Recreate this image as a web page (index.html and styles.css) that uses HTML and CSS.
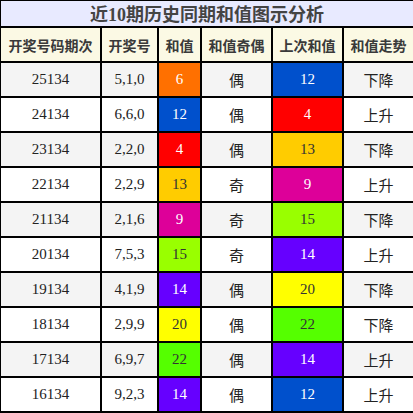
FILE: index.html
```html
<!DOCTYPE html>
<html lang="zh">
<head>
<meta charset="utf-8">
<link rel="stylesheet" href="styles.css">
</head>
<body>
<table class="tbl">
<colgroup>
<col class="c1"><col class="c2"><col class="c3"><col class="c4"><col class="c5"><col class="c6">
</colgroup>
<tr class="title"><th colspan="6">近10期历史同期和值图示分析</th></tr>
<tr class="head"><th>开奖号码期次</th><th>开奖号</th><th>和值</th><th>和值奇偶</th><th>上次和值</th><th>和值走势</th></tr>
<tr class="odd"><td>25134</td><td>5,1,0</td><td class="v orange">6</td><td class="cj">偶</td><td class="v blue">12</td><td class="cj">下降</td></tr>
<tr><td>24134</td><td>6,6,0</td><td class="v blue">12</td><td class="cj">偶</td><td class="v red">4</td><td class="cj">上升</td></tr>
<tr class="odd"><td>23134</td><td>2,2,0</td><td class="v red">4</td><td class="cj">偶</td><td class="v gold dark">13</td><td class="cj">下降</td></tr>
<tr><td>22134</td><td>2,2,9</td><td class="v gold dark">13</td><td class="cj">奇</td><td class="v magenta">9</td><td class="cj">上升</td></tr>
<tr class="odd"><td>21134</td><td>2,1,6</td><td class="v magenta">9</td><td class="cj">奇</td><td class="v lime dark">15</td><td class="cj">下降</td></tr>
<tr><td>20134</td><td>7,5,3</td><td class="v lime dark">15</td><td class="cj">奇</td><td class="v purple">14</td><td class="cj">上升</td></tr>
<tr class="odd"><td>19134</td><td>4,1,9</td><td class="v purple">14</td><td class="cj">偶</td><td class="v yellow dark">20</td><td class="cj">下降</td></tr>
<tr><td>18134</td><td>2,9,9</td><td class="v yellow dark">20</td><td class="cj">偶</td><td class="v green dark">22</td><td class="cj">下降</td></tr>
<tr class="odd"><td>17134</td><td>6,9,7</td><td class="v green dark">22</td><td class="cj">偶</td><td class="v purple">14</td><td class="cj">上升</td></tr>
<tr><td>16134</td><td>9,2,3</td><td class="v purple">14</td><td class="cj">偶</td><td class="v blue">12</td><td class="cj">上升</td></tr>
</table>
</body>
</html>
```
FILE: styles.css
```css
html, body {
  margin: 0;
  padding: 0;
  background: #ffffff;
}
.tbl {
  border-collapse: collapse;
  table-layout: fixed;
  width: 414px;
  margin: -1px 0 0 -1px;
  font-family: "Liberation Serif", "Noto Sans CJK SC", serif;
  color: #222;
}
.c1 { width: 101px; }
.c2 { width: 57px; }
.c3 { width: 43px; }
.c4 { width: 71px; }
.c5 { width: 71px; }
.c6 { width: 71px; }
.tbl th, .tbl td {
  border: 2px solid #000;
  padding: 0;
  text-align: center;
  vertical-align: middle;
}
.title th {
  height: 23px;
  padding-top: 2px;
  background: #e8eaff;
  font-size: 18px;
  font-weight: bold;
  color: #444;
  line-height: 22px;
}
.head th {
  height: 33px;
  background: #fbf9e4;
  font-size: 14px;
  font-weight: bold;
  color: #3a3a3a;
  font-family: "Noto Sans CJK SC", sans-serif;
}
.tbl td {
  height: 33px;
  font-size: 15px;
}
.odd td { background: #f4f4f4; }
.cj {
  font-family: "Noto Sans CJK SC", sans-serif;
  font-size: 15px;
  color: #222;
}
.tbl td.v { color: #fff; }
.tbl td.v.dark { color: #333; }
.tbl td.orange { background: #ff7000; }
.tbl td.blue { background: #0050cc; }
.tbl td.red { background: #ff0000; }
.tbl td.gold { background: #ffcc00; }
.tbl td.magenta { background: #dd0099; }
.tbl td.lime { background: #99ff00; }
.tbl td.purple { background: #6600ff; }
.tbl td.yellow { background: #ffff00; }
.tbl td.green { background: #55ff00; }
```
